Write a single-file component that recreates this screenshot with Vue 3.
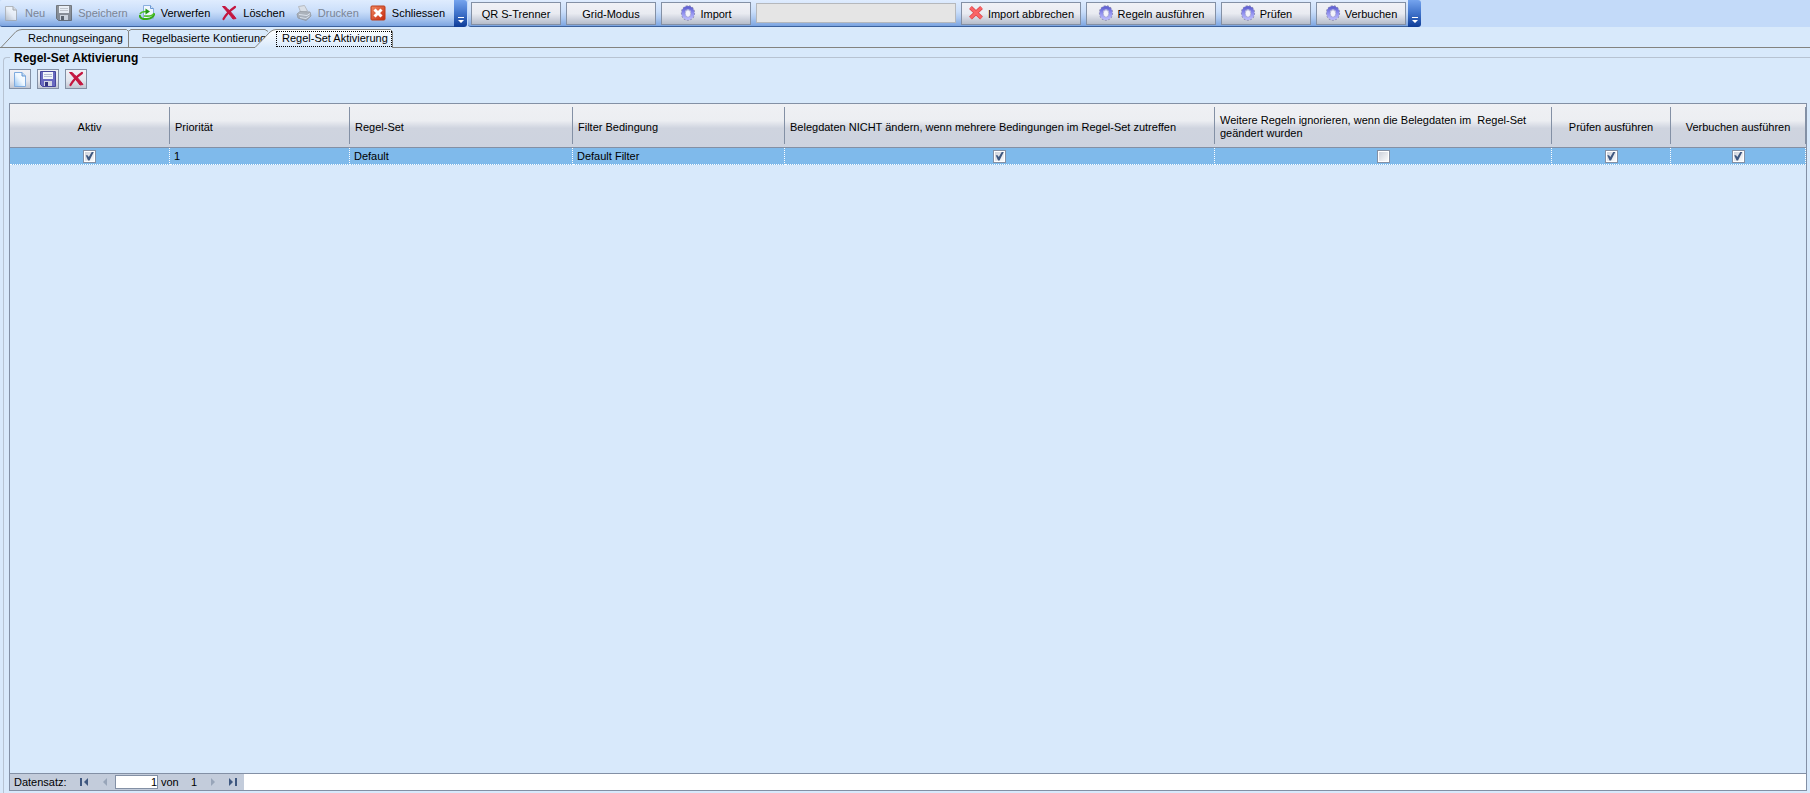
<script setup>
import { ref } from 'vue'

const menu = [
  { label: 'Neu', icon: 'page', disabled: true },
  { label: 'Speichern', icon: 'disk', disabled: true },
  { label: 'Verwerfen', icon: 'revert' },
  { label: 'Löschen', icon: 'cross' },
  { label: 'Drucken', icon: 'printer', disabled: true },
  { label: 'Schliessen', icon: 'close' }
]
const actionsBefore = [
  { label: 'QR S-Trenner', size: 'w90' },
  { label: 'Grid-Modus', size: 'w90' },
  { label: 'Import', icon: 'gear', size: 'w90' }
]
const actionsAfter = [
  { label: 'Import abbrechen', icon: 'cancel', size: 'w120' },
  { label: 'Regeln ausführen', icon: 'gear', size: 'w130' },
  { label: 'Prüfen', icon: 'gear', size: 'w90' },
  { label: 'Verbuchen', icon: 'gear', size: 'w90' }
]
const columns = [
  { key: 'aktiv', label: 'Aktiv', check: true, center: true },
  { key: 'prio', label: 'Priorität' },
  { key: 'set', label: 'Regel-Set' },
  { key: 'filter', label: 'Filter Bedingung' },
  { key: 'keep', label: 'Belegdaten NICHT ändern, wenn mehrere Bedingungen im Regel-Set zutreffen', check: true },
  { key: 'ignore', label: 'Weitere Regeln ignorieren, wenn die Belegdaten im  Regel-Set geändert wurden', check: true },
  { key: 'pruefen', label: 'Prüfen ausführen', check: true, center: true },
  { key: 'buchen', label: 'Verbuchen ausführen', check: true, center: true }
]
const rows = ref([
  { aktiv: true, prio: '1', set: 'Default', filter: 'Default Filter', keep: true, ignore: false, pruefen: true, buchen: true }
])
const position = ref('1')
</script>

<template>
  <div class="app">
    <svg class="defs" aria-hidden="true">
      <defs>
        <linearGradient id="pageFill" x1="0" y1="1" x2="1" y2="0">
          <stop offset="0" stop-color="#8fc0f0" /><stop offset="0.5" stop-color="#eef7ff" /><stop offset="1" stop-color="#ffffff" />
        </linearGradient>
        <linearGradient id="tabFill" x1="0" y1="0" x2="0" y2="1">
          <stop offset="0" stop-color="#ffffff" /><stop offset="1" stop-color="#d8e9fb" />
        </linearGradient>
        <linearGradient id="closeFill" x1="0" y1="0" x2="1" y2="1">
          <stop offset="0" stop-color="#f08a62" /><stop offset="1" stop-color="#c62a10" />
        </linearGradient>
        <linearGradient id="gearFill" x1="0" y1="0" x2="0" y2="1">
          <stop offset="0" stop-color="#6464d2" /><stop offset="0.5" stop-color="#9090ee" /><stop offset="1" stop-color="#b4b4fa" />
        </linearGradient>
      </defs>
      <symbol id="page" viewBox="0 0 16 16">
        <path d="M2.500 1.500H10L13.500 5V15.500H2.500Z" fill="url(#pageFill)" stroke="#7fabdf" />
        <path d="M10 1.500V5H13.500" fill="#c3dcf6" stroke="#6395d2" />
      </symbol>
      <symbol id="disk" viewBox="0 0 16 16">
        <path d="M0.500 0.500H15.500V15.500H2.500L0.500 13.500Z" fill="#6a6ac0" stroke="#46469c" />
        <path d="M3 1H13V8H3Z" fill="#f2f4fa" />
        <path d="M4 3.500H12M4 5.500H12" stroke="#b4bbd2" />
        <path d="M4 10H12V15H4Z" fill="#d2d6e4" />
        <path d="M5 11H8V15H5Z" fill="#34347c" />
      </symbol>
      <symbol id="cross" viewBox="0 0 16 16">
        <path d="M1.500 1.500L4 1.500C7 4 11 8 15 13.500L12 14C9 10 6 6.500 1.500 1.500Z" fill="#c4163f" stroke="#c4163f" />
        <path d="M14 2C9 5.500 5 9.500 2.500 14" fill="none" stroke="#c4163f" stroke-width="2.200" stroke-linecap="round" />
      </symbol>
      <symbol id="revert" viewBox="0 0 16 16">
        <path d="M4.500 0.500H11.500L14.500 3.500V13.500H4.500Z" fill="#eff6ff" stroke="#89aede" />
        <path d="M11.500 0.500V3.500H14.500" fill="#cfe2f8" stroke="#6c98d4" />
        <path d="M1 10C0 13 4 14.500 8 14C12.500 13.500 15.500 11 15 8.500" fill="none" stroke="#35ab17" stroke-width="2" />
        <path d="M1 9C2 7 4 6.500 7 6.500M15 8C14 11 10 11.500 5 11" fill="none" stroke="#4dc02b" stroke-width="1.600" />
        <path d="M6.500 3.500L11 6.500L6.500 9.500Z" fill="#249713" />
      </symbol>
      <symbol id="printer" viewBox="0 0 16 16">
        <path d="M2.500 1.500L8.500 0.500L11.500 6L5 8Z" fill="#dcdfe4" stroke="#a3a8b4" />
        <path d="M1 9L4 6.500L14 7L15 11L10 15.500L2 13Z" fill="#a0a4ae" stroke="#868b98" />
        <path d="M3 9.500L11 10.500L14 8.500M4 12.500L10 13.500L13.500 11" fill="none" stroke="#e8eaee" />
      </symbol>
      <symbol id="close" viewBox="0 0 16 16">
        <rect x="1" y="1" width="14" height="14" rx="1" fill="url(#closeFill)" stroke="#bc3c1a" />
        <path d="M4.500 4.500L11.500 11.500M11.500 4.500L4.500 11.500" stroke="#fff" stroke-width="3" />
      </symbol>
      <symbol id="cancel" viewBox="0 0 16 16">
        <path d="M2.500 2.500L13.500 13M13.500 2.500L2.500 13" stroke="#d8434a" stroke-width="4" />
        <path d="M2.500 2.500L13.500 13M13.500 2.500L2.500 13" stroke="#fa6466" stroke-width="2.600" />
      </symbol>
      <symbol id="gear" viewBox="0 0 16 16">
        <ellipse cx="8" cy="8" rx="6.400" ry="7" fill="none" stroke="#8a8aae" stroke-width="1.400" stroke-dasharray="2 1.200" />
        <ellipse cx="8" cy="8" rx="4.700" ry="5.200" fill="none" stroke="url(#gearFill)" stroke-width="3.600" />
        <ellipse cx="8" cy="8.500" rx="2.700" ry="3.700" fill="#f3f3fb" stroke="#8f8fc4" stroke-width="0.600" />
      </symbol>
    </svg>

    <header class="bars">
      <div class="bar menu" role="toolbar" aria-label="Standard">
        <button v-for="m in menu" :key="m.label" class="menu-item" :disabled="m.disabled">
          <svg class="icon" aria-hidden="true"><use :href="'#' + m.icon" /></svg>{{ m.label }}
        </button>
      </div>
      <button class="overflow" aria-label="Weitere Schaltflächen">
        <svg width="8" height="8" viewBox="0 0 8 8"><path d="M1 0H7V1H1ZM1 3H7L4 6Z" fill="#fff" /></svg>
      </button>
      <div class="bar actions" role="toolbar" aria-label="Aktionen">
        <button v-for="a in actionsBefore" :key="a.label" class="action" :class="a.size">
          <svg v-if="a.icon" class="icon" aria-hidden="true"><use :href="'#' + a.icon" /></svg><span>{{ a.label }}</span>
        </button>
        <div class="progress" role="progressbar" aria-label="Import"></div>
        <button v-for="a in actionsAfter" :key="a.label" class="action" :class="a.size">
          <svg v-if="a.icon" class="icon" aria-hidden="true"><use :href="'#' + a.icon" /></svg><span>{{ a.label }}</span>
        </button>
      </div>
      <button class="overflow" aria-label="Weitere Aktionen">
        <svg width="8" height="8" viewBox="0 0 8 8"><path d="M1 0H7V1H1ZM1 3H7L4 6Z" fill="#fff" /></svg>
      </button>
    </header>

    <nav class="tabs" role="tablist">
      <button class="tab first" role="tab" aria-selected="false">
        <svg class="shape" width="129" height="20" aria-hidden="true">
          <path d="M1 19.500L16 3.500Q19 1.500 22 1.500H126.500L128.500 3.500V19" fill="none" stroke="#83837f" />
        </svg>
        <span>Rechnungseingang</span>
      </button>
      <button class="tab second" role="tab" aria-selected="false">
        <svg class="shape" width="142" height="20" aria-hidden="true">
          <path d="M0 3.500L3 1.500H137L140 3.500" fill="none" stroke="#83837f" />
        </svg>
        <span>Regelbasierte Kontierung</span>
      </button>
      <button class="tab third" role="tab" aria-selected="true">
        <svg class="shape" width="138" height="20" aria-hidden="true">
          <path d="M0 20L15 4Q18 1.500 21 1.500H135.500L137.500 3.500V20Z" fill="url(#tabFill)" />
          <path d="M0 19.500L15 4Q18 1.500 21 1.500H135.500L137.500 3.500V20" fill="none" stroke="#83837f" />
        </svg>
        <span class="focus">Regel-Set Aktivierung</span>
      </button>
      <div class="tab-line"></div>
    </nav>

    <fieldset class="group">
      <legend>Regel-Set Aktivierung</legend>
      <div class="tools">
        <button class="tool" aria-label="Neu"><svg class="icon"><use href="#page" /></svg></button>
        <button class="tool" aria-label="Speichern"><svg class="icon"><use href="#disk" /></svg></button>
        <button class="tool" aria-label="Löschen"><svg class="icon"><use href="#cross" /></svg></button>
      </div>

      <div class="grid">
        <div class="grid-body">
          <table>
            <colgroup>
              <col v-for="c in columns" :key="c.key" :class="'col-' + c.key" />
            </colgroup>
            <thead>
              <tr>
                <th v-for="c in columns" :key="c.key" scope="col" :class="{ center: c.center }">
                  <div class="head">{{ c.label }}</div>
                </th>
              </tr>
            </thead>
            <tbody>
              <tr v-for="(r, i) in rows" :key="i">
                <td v-for="c in columns" :key="c.key" :class="{ center: c.check }">
                  <input v-if="c.check" v-model="r[c.key]" type="checkbox" :aria-label="c.label" />
                  <template v-else>{{ r[c.key] }}</template>
                </td>
              </tr>
            </tbody>
          </table>
        </div>
        <footer class="navigator">
          <div class="nav-box">
            <label class="nav-label" for="record">Datensatz:</label>
            <button class="nav" aria-label="Erster"><svg width="10" height="8"><path d="M0 0H2V8H0ZM8 0V8L4 4Z" fill="#3f5880" /></svg></button>
            <button class="nav" aria-label="Vorheriger" disabled><svg width="10" height="8"><path d="M6 0V8L2 4Z" fill="#98a5b9" /></svg></button>
            <input id="record" v-model="position" class="record" type="text" />
            <span class="of">von</span>
            <span class="total">1</span>
            <button class="nav" aria-label="Nächster" disabled><svg width="10" height="8"><path d="M4 0V8L8 4Z" fill="#98a5b9" /></svg></button>
            <button class="nav" aria-label="Letzter"><svg width="10" height="8"><path d="M1 0V8L5 4ZM7 0H9V8H7Z" fill="#3f5880" /></svg></button>
          </div>
        </footer>
      </div>
    </fieldset>
  </div>
</template>

<style>
html, body, #app { height: 100%; }
body { margin: 0; overflow: hidden; }
</style>

<style scoped>
.app {
  height: 100%;
  display: flex;
  flex-direction: column;
  background: #d8e9fb;
  color: #000;
  font-family: "Liberation Sans", Arial, sans-serif;
  font-size: 11px;
  line-height: 13px;
}
.app * { box-sizing: border-box; }
.defs { position: absolute; width: 0; height: 0; }
button, input { font: inherit; color: inherit; margin: 0; padding: 0; border: 0; background: none; border-radius: 0; }
.icon { width: 16px; height: 16px; flex: none; display: block; }

.bars { display: flex; height: 27px; flex: none; background: #c3daf9; }
.bar {
  display: flex;
  align-items: center;
  height: 27px;
  border-bottom: 1px solid #3b619c;
  background: linear-gradient(#dfecfe, #cadefa 45%, #acc8f0 70%, #7ba4e0);
}
.menu { width: 454px; gap: 11px; padding-left: 3px; border-radius: 2px 0 0 2px; }
.menu-item { display: flex; align-items: center; gap: 6px; height: 24px; white-space: nowrap; }
.menu-item:disabled { color: #7b8595; }
.menu-item:disabled .icon { filter: grayscale(1); opacity: 0.7; }
.overflow {
  width: 13px;
  height: 27px;
  display: flex;
  align-items: flex-end;
  justify-content: center;
  padding-bottom: 2px;
  border-radius: 0 3px 3px 0;
  background: linear-gradient(#75a4ee, #3f72ca 50%, #0d3b96);
}
.actions { gap: 5px; padding: 0 2px 0 3px; margin-left: 1px; border-radius: 3px 0 0 3px; }
.action {
  display: flex;
  align-items: center;
  justify-content: center;
  gap: 4px;
  height: 23px;
  border: 1px solid #8390a5;
  background: linear-gradient(#f0f1f6, #e9ebf1 50%, #d4d8e2 70%, #b6bdca);
  white-space: nowrap;
}
.action span { padding-top: 2px; }
.w90 { width: 90px; }
.w120 { width: 120px; }
.w130 { width: 130px; }
.progress { width: 200px; height: 20px; border: 1px solid #b5b8bc; background: #e5e5e5; }

.tabs { display: flex; height: 21px; padding-top: 1px; flex: none; }
.tab { position: relative; height: 20px; padding-top: 1px; text-align: left; white-space: nowrap; flex: none; border-bottom: 1px solid #83837f; }
.tab span { position: relative; }
.shape { position: absolute; left: 0; top: 0; }
.first { width: 128px; padding-left: 28px; }
.second { width: 127px; padding-left: 14px; }
.third { width: 138px; padding-left: 21px; border-bottom: 0; }
.focus { display: block; width: 116px; height: 16px; padding: 0 5px; border: 1px dotted #000; }
.tab-line { flex: 1; border-bottom: 1px solid #83837f; }

.group {
  flex: 1;
  min-width: 0;
  min-height: 0;
  display: flex;
  flex-direction: column;
  margin: 2px 0 0 3px;
  padding: 5px 3px 2px 5px;
  border: 1px solid #b7c3d2;
  border-right: 0;
  border-bottom: 0;
  border-radius: 4px 0 0 0;
}
.group legend { height: 14px; padding: 0 4px; margin-left: 1px; font-size: 12px; font-weight: 700; line-height: 16px; }
.tools { display: flex; gap: 6px; flex: none; }
.tool {
  width: 22px;
  height: 20px;
  display: flex;
  align-items: center;
  justify-content: center;
  border: 1px solid #8390a5;
  background: linear-gradient(#f0f1f6, #e2e5ed 60%, #c0c6d2);
}
.grid { flex: 1; min-height: 0; margin-top: 14px; display: flex; flex-direction: column; border: 1px solid #8390a5; }
.grid-body { flex: 1; min-height: 0; }
table { width: 100%; table-layout: fixed; border-collapse: separate; border-spacing: 0; }
.col-aktiv { width: 160px; }
.col-prio { width: 180px; }
.col-set { width: 223px; }
.col-filter { width: 212px; }
.col-ignore { width: 337px; }
.col-pruefen { width: 119px; }
.col-buchen { width: 135px; }
thead { background: linear-gradient(#eff0f4, #eceef2 38%, #cfd4df 55%, #cdd3df); }
th { height: 44px; padding: 3px 0; border-bottom: 1px solid #8390a5; font-weight: 400; text-align: left; }
.head { height: 37px; display: flex; align-items: center; padding: 3px 20px 0 5px; border-right: 1px solid #8390a5; white-space: pre-wrap; }
th.center .head { justify-content: center; padding: 3px 0 0; }
td { height: 17px; padding: 0 4px; background: #7fbaeb; border-right: 1px dotted #fff; border-bottom: 1px dotted #fff; }
td.center { text-align: center; }
td input {
  appearance: none;
  display: block;
  width: 13px;
  height: 13px;
  margin: 0 auto;
  border: 1px solid #8390a5;
  background: linear-gradient(135deg, #c8cdd8, #fff);
  box-shadow: inset 0 0 0 1px #fff;
}
td input:checked::before {
  content: "";
  display: block;
  width: 9px;
  height: 9px;
  margin: 1px;
  background: #3f5880;
  clip-path: polygon(8% 42%, 28% 42%, 42% 62%, 78% 0, 100% 0, 50% 100%, 34% 100%);
}
.navigator { height: 17px; display: flex; flex: none; border-top: 1px solid #8390a5; background: #fff; }
.nav-box { width: 234px; height: 16px; display: flex; align-items: center; background: #c3ccdb; }
.nav-label { width: 70px; padding-left: 4px; }
.nav { width: 10px; height: 16px; display: flex; align-items: center; margin-right: 11px; }
.nav:last-child { margin: 0; }
.nav + .record { margin-left: -7px; }
.record { width: 43px; height: 14px; border: 1px solid #8390a5; background: #fff; text-align: right; }
.of { width: 33px; padding-left: 3px; }
.total { width: 16px; }
</style>
